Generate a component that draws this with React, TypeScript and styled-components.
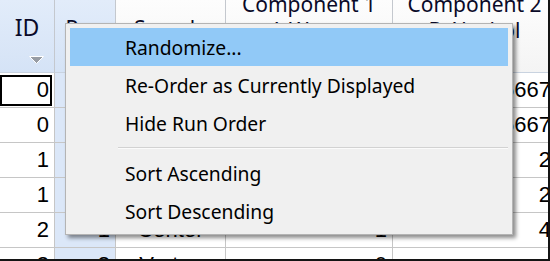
import { Fragment } from 'react'
import styled, { createGlobalStyle } from 'styled-components'

const GlobalStyle = createGlobalStyle`
  html, body {
    margin: 0;
    padding: 0;
    background: #ffffff;
    overflow: hidden;
  }
`

const Frame = styled.div`
  position: relative;
  width: 550px;
  height: 261px;
  box-sizing: border-box;
  overflow: hidden;
  border-right: 2px solid #141414;
  border-bottom: 2px solid #141414;
  background: #ffffff;
`

const Grid = styled.div`
  display: grid;
  grid-template-columns: 55px 61px 110px 167px 164px;
  grid-template-rows: 73px repeat(6, 35px);
  width: 557px;
`

const HeaderCell = styled.div<{ $blue?: boolean }>`
  box-sizing: border-box;
  display: flex;
  flex-direction: column;
  align-items: center;
  overflow: hidden;
  background: ${(p) =>
    p.$blue ? 'linear-gradient(#e2ecfa, #d5e3f6)' : 'linear-gradient(#fdfdfd, #f4f4f4)'};
  border-right: 1px solid #c4c8ce;
  border-bottom: 1px solid #c9d3e0;
  font-family: 'Noto Sans', 'Open Sans', sans-serif;
  font-size: 21px;
  line-height: 26px;
  color: #0a0a28;
  white-space: nowrap;
`

const HeaderText = styled.div<{ $shift: number; $size?: number }>`
  display: flex;
  flex-direction: column;
  align-items: center;
  margin-top: ${(p) => p.$shift}px;
  font-size: ${(p) => p.$size ?? 21}px;
`

const SortArrow = styled.svg`
  margin-top: 16px;
  margin-left: 18px;
`

const Cell = styled.div<{ $align?: 'right' | 'center'; $blue?: boolean; $selected?: boolean }>`
  position: relative;
  box-sizing: border-box;
  display: flex;
  align-items: center;
  justify-content: ${(p) => (p.$align === 'center' ? 'center' : 'flex-end')};
  padding-right: ${(p) => (p.$align === 'center' ? 0 : 5)}px;
  overflow: hidden;
  background: ${(p) => (p.$blue ? '#dbe7f8' : '#ffffff')};
  border-right: 1px solid #c6c6c6;
  border-bottom: 1px solid #c6c6c6;
  font-family: 'Liberation Sans', Arial, sans-serif;
  font-size: 22px;
  color: #000000;
  white-space: nowrap;

  ${(p) =>
    p.$selected &&
    `
    &::after {
      content: '';
      position: absolute;
      left: 0;
      top: 2px;
      right: 2px;
      bottom: 1px;
      border: 2px solid #000;
    }
  `}
`

const Menu = styled.div`
  position: absolute;
  left: 65px;
  top: 23px;
  width: 448px;
  box-sizing: border-box;
  padding: 4px;
  background: #f0f0f0;
  border: 1px solid #b4b4b4;
  box-shadow: 3px 3px 4px rgba(0, 0, 0, 0.45);
  font-family: 'Noto Sans', 'Open Sans', sans-serif;
  font-size: 19.3px;
  color: #000000;
`

const MenuItem = styled.div<{ $active?: boolean }>`
  height: 38px;
  display: flex;
  align-items: center;
  padding-left: 55px;
  background: ${(p) => (p.$active ? '#91c9f7' : 'transparent')};
  white-space: nowrap;
`

const MenuSeparator = styled.div`
  height: 12px;
  display: flex;
  align-items: center;
  padding-left: 48px;

  &::before {
    content: '';
    flex: 1;
    height: 1px;
    background: #d2d2d2;
    border-bottom: 1px solid #fbfbfb;
  }
`

type Row = { id: string; run: string; type: string; c1: string; c2: string }

const rows: Row[] = [
  { id: '0', run: '3', type: 'Vertex', c1: '0.8333333', c2: '0.16666667' },
  { id: '0', run: '5', type: 'Vertex', c1: '0.8333333', c2: '0.16666667' },
  { id: '1', run: '2', type: 'Edge', c1: '0.5', c2: '2' },
  { id: '1', run: '6', type: 'Edge', c1: '0.5', c2: '2' },
  { id: '2', run: '1', type: 'Center', c1: '1', c2: '4' },
  { id: '3', run: '8', type: 'Vertex', c1: '0', c2: '' },
]

const menuItems = ['Randomize...', 'Re-Order as Currently Displayed', 'Hide Run Order']
const sortItems = ['Sort Ascending', 'Sort Descending']

export default function App() {
  return (
    <>
      <GlobalStyle />
      <Frame>
        <Grid>
          <HeaderCell $blue>
            <HeaderText $shift={14} $size={23}>
              <span>ID</span>
            </HeaderText>
            <SortArrow width="15" height="8" viewBox="0 0 15 8">
              <path d="M0.5 0.5 L14.5 0.5 L7.5 7.5 Z" fill="#979ca4" stroke="#ffffff" strokeWidth="1" />
            </SortArrow>
          </HeaderCell>
          <HeaderCell $blue>
            <HeaderText $shift={15}>
              <span>Run</span>
            </HeaderText>
          </HeaderCell>
          <HeaderCell>
            <HeaderText $shift={15}>
              <span>Sample</span>
            </HeaderText>
          </HeaderCell>
          <HeaderCell>
            <HeaderText $shift={-9}>
              <span>Component 1</span>
              <span>A:Water</span>
            </HeaderText>
          </HeaderCell>
          <HeaderCell>
            <HeaderText $shift={-9}>
              <span>Component 2</span>
              <span>B:Alcohol</span>
            </HeaderText>
          </HeaderCell>

          {rows.map((r, i) => (
            <Fragment key={i}>
              <Cell $selected={i === 0}>{r.id}</Cell>
              <Cell $blue>{r.run}</Cell>
              <Cell $align="center">{r.type}</Cell>
              <Cell>{r.c1}</Cell>
              <Cell>{r.c2}</Cell>
            </Fragment>
          ))}
        </Grid>

        <Menu>
          {menuItems.map((m, i) => (
            <MenuItem key={m} $active={i === 0}>{m}</MenuItem>
          ))}
          <MenuSeparator />
          {sortItems.map((m) => (
            <MenuItem key={m}>{m}</MenuItem>
          ))}
        </Menu>
      </Frame>
    </>
  )
}
